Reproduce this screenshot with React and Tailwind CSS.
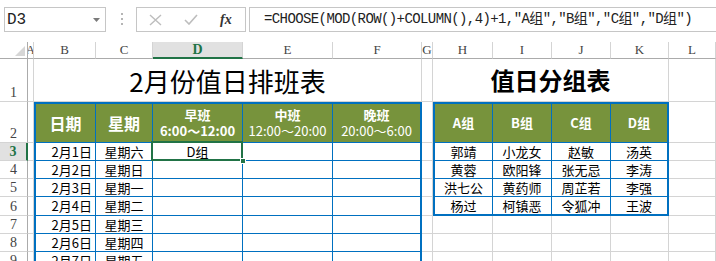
const cjk = "font-['Noto_Sans_CJK_SC',sans-serif]"
const serif = "font-['Liberation_Serif','Noto_Sans_CJK_SC',serif]"
const grid = "border-r border-b border-[#d4d4d4]"

const dates = ["2月1日", "2月2日", "2月3日", "2月4日", "2月5日", "2月6日", "2月7日"]
const days = ["星期六", "星期日", "星期一", "星期二", "星期三", "星期四", "星期五"]
const groups = [
  ["郭靖", "小龙女", "赵敏", "汤英"],
  ["黄蓉", "欧阳锋", "张无忌", "李涛"],
  ["洪七公", "黄药师", "周芷若", "李强"],
  ["杨过", "柯镇恶", "令狐冲", "王波"],
]
const letters = ["A", "B", "C", "D", "E", "F", "G", "H", "I", "J", "K", "L"]

function FormulaBar() {
  return (
    <div className="h-[42px] flex items-start pt-[7px] bg-white">
      <div className="ml-[4px] w-[102px] h-[25px] border border-[#c6c6c6] flex items-center justify-between pl-[2px] pr-[5px]">
        <span className="font-['Liberation_Mono',monospace] text-[16px] text-[#222] leading-none">D3</span>
        <svg width="7" height="4" viewBox="0 0 7 4">
          <path d="M0 0H7L3.5 4Z" fill="#7a7a7a" />
        </svg>
      </div>
      <div className="ml-[15px] mt-[6px] flex flex-col gap-[3px]">
        <div className="w-[2px] h-[2px] bg-[#b5b5b5]" />
        <div className="w-[2px] h-[2px] bg-[#b5b5b5]" />
        <div className="w-[2px] h-[2px] bg-[#b5b5b5]" />
      </div>
      <div className="ml-[13px] w-[110px] h-[25px] border border-[#c6c6c6] flex items-center">
        <svg className="ml-[12px]" width="13" height="12" viewBox="0 0 13 12">
          <path d="M1 1L12 11M12 1L1 11" stroke="#bdbdbd" strokeWidth="1.4" fill="none" />
        </svg>
        <svg className="ml-[22px]" width="14" height="11" viewBox="0 0 14 11">
          <path d="M1 6L5 10L13 1" stroke="#bdbdbd" strokeWidth="1.6" fill="none" />
        </svg>
        <span className={"ml-[22px] italic font-semibold text-[14px] text-[#333] leading-none " + serif}>fx</span>
      </div>
      <div className="ml-[3px] flex-1 h-[25px] border border-r-0 border-[#c6c6c6] pl-[14px] flex items-center overflow-hidden whitespace-nowrap">
        <span className="font-['Liberation_Mono','Noto_Sans_CJK_SC',monospace] text-[14px] tracking-[-0.6px] text-[#222]">
          =CHOOSE(MOD(ROW()+COLUMN(),4)+1,"A组","B组","C组","D组")
        </span>
      </div>
    </div>
  )
}

function RowNum({ n, active }) {
  if (active) {
    return (
      <div className={"flex items-end justify-center bg-[#e1e1e1] border-r-2 border-r-[#217346] border-b border-b-[#d4d4d4] text-[14px] leading-[17px] text-[#217346] font-bold " + serif}>
        {n}
      </div>
    )
  }
  return (
    <div className={"flex items-end justify-center border-r border-r-[#ababab] border-b border-b-[#d4d4d4] text-[14px] leading-[17px] text-[#444] " + serif}>
      {n}
    </div>
  )
}

function ScheduleTable() {
  const head = "flex flex-col items-center justify-center bg-[#77933c] text-white font-bold border-r border-b border-[#0070c0] " + cjk
  return (
    <div className="col-start-3 row-start-3 col-span-5 row-span-8 border-2 border-b-0 border-[#0070c0] grid grid-cols-[60px_57px_90px_90px_87px] grid-rows-[39px_18px_18px_18px_19px_18px_18px_18px]">
      <div className={head + " text-[16px]"}>日期</div>
      <div className={head + " text-[16px]"}>星期</div>
      <div className={head + " text-[13px] leading-[16px]"}>
        <span>早班</span>
        <span>6:00～12:00</span>
      </div>
      <div className={head + " text-[13px] leading-[16px]"}>
        <span>中班</span>
        <span className="font-normal">12:00～20:00</span>
      </div>
      <div className={head + " border-r-0 text-[13px] leading-[16px]"}>
        <span>晚班</span>
        <span className="font-normal">20:00～6:00</span>
      </div>
      {dates.map((d, i) => (
        <div key={d} className="contents">
          <div className={"flex items-center justify-end pr-[3px] text-[13px] border-r border-b border-[#0070c0] " + cjk}>{d}</div>
          <div className={"flex items-center justify-center text-[13px] border-r border-b border-[#0070c0] " + cjk}>{days[i]}</div>
          <div className={"relative flex items-center justify-center text-[13px] border-r border-b border-[#0070c0] " + cjk}>
            {i === 0 && (
              <>
                <span>D组</span>
                <div className="absolute -left-[2px] -top-[2px] -right-[1px] -bottom-[1px] border-2 border-[#217346] z-10" />
                <div className="absolute -right-[4px] -bottom-[4px] w-[6px] h-[6px] bg-[#217346] border border-white z-20" />
              </>
            )}
          </div>
          <div className="border-r border-b border-[#0070c0]" />
          <div className="border-b border-[#0070c0]" />
        </div>
      ))}
    </div>
  )
}

function GroupTable() {
  const head = "flex items-center justify-center bg-[#77933c] text-white font-bold text-[13px] border-b border-[#0070c0] " + cjk
  return (
    <div className="col-start-9 row-start-3 col-span-4 row-span-5 border-2 border-[#0070c0] grid grid-cols-[58px_59px_59px_56px] grid-rows-[39px_18px_18px_18px_17px]">
      <div className={head + " border-r"}>A组</div>
      <div className={head + " border-r"}>B组</div>
      <div className={head + " border-r"}>C组</div>
      <div className={head}>D组</div>
      {groups.map((row, r) =>
        row.map((name, c) => (
          <div
            key={name}
            className={
              "flex items-center justify-center text-[13px] border-[#0070c0] " +
              (c < 3 ? "border-r " : "") +
              (r < 3 ? "border-b " : "") +
              cjk
            }
          >
            {name}
          </div>
        ))
      )}
    </div>
  )
}

export default function App() {
  const rows = [3, 4, 5, 6, 7, 8, 9]
  return (
    <div className="w-[716px] h-[261px] overflow-hidden bg-white text-black">
      <FormulaBar />
      <div className="grid grid-cols-[28px_6px_62px_57px_90px_90px_89px_11px_60px_59px_59px_58px_1fr] grid-rows-[17px_43px_41px_18px_18px_18px_19px_18px_18px_18px]">
        {/* column headings */}
        <div className="relative border-r border-r-[#ababab] border-b border-b-[#ababab]">
          <svg className="absolute right-[2px] bottom-[2px]" width="10" height="10" viewBox="0 0 10 10">
            <path d="M10 0V10H0Z" fill="#d6d6d6" />
          </svg>
        </div>
        {letters.map((l) =>
          l === "D" ? (
            <div key={l} className={"flex items-center justify-center overflow-hidden bg-[#e1e1e1] border-r border-r-[#d4d4d4] border-b-2 border-b-[#217346] text-[14px] font-bold text-[#217346] " + serif}>
              {l}
            </div>
          ) : (
            <div key={l} className={"flex items-center justify-center overflow-hidden border-r border-r-[#d4d4d4] border-b border-b-[#ababab] text-[13px] text-[#444] " + serif}>
              {l}
            </div>
          )
        )}

        {/* row 1 */}
        <RowNum n={1} />
        <div className={grid} />
        <div className={"col-span-5 flex items-center justify-center text-[26px] " + grid + " " + cjk}>2月份值日排班表</div>
        <div className={grid} />
        <div className={"col-span-4 flex items-center justify-center text-[24px] font-bold " + grid + " " + cjk}>值日分组表</div>
        <div className={grid} />

        {/* row 2 */}
        <RowNum n={2} />
        <div className={grid} />
        <ScheduleTable />
        <div className={grid} />
        <GroupTable />
        <div className={grid} />

        {rows.map((n) => (
          <div key={n} className="contents">
            <RowNum n={n} active={n === 3} />
            <div className={grid} />
            <div className={grid} />
            {n >= 7 && (
              <>
                <div className={grid} />
                <div className={grid} />
                <div className={grid} />
                <div className={grid} />
              </>
            )}
            <div className={grid} />
          </div>
        ))}
      </div>
    </div>
  )
}
